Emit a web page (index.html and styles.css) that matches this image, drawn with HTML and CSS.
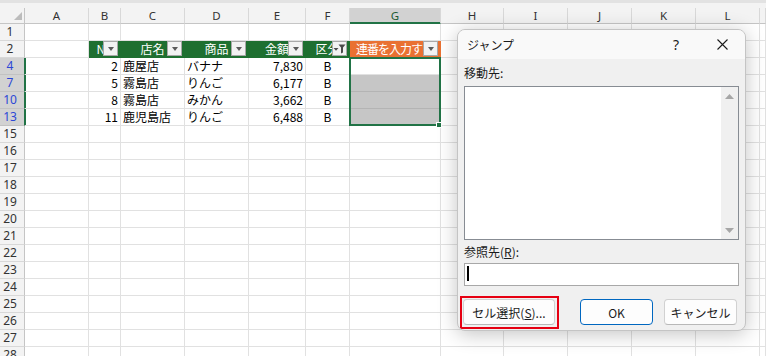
FILE: index.html
```html
<!DOCTYPE html>
<html lang="ja">
<head>
<meta charset="utf-8">
<title>ジャンプ</title>
<link rel="stylesheet" href="styles.css">
</head>
<body>
<div class="sheet">
  <div class="topstrip"></div>
  <div class="row colhead">
    <span class="ch corner"><svg width="8" height="8" viewBox="0 0 8 8"><polygon points="8,0 8,8 0,8" fill="#bcbcbc"/></svg></span>
    <span class="ch">A</span><span class="ch">B</span><span class="ch">C</span><span class="ch">D</span><span class="ch">E</span><span class="ch">F</span><span class="ch sel">G</span><span class="ch">H</span><span class="ch">I</span><span class="ch">J</span><span class="ch">K</span><span class="ch">L</span><span class="ch"></span>
  </div>
  <div class="row"><span class="rh">1</span><span class="c"></span><span class="c"></span><span class="c"></span><span class="c"></span><span class="c"></span><span class="c"></span><span class="c"></span><span class="c"></span><span class="c"></span><span class="c"></span><span class="c"></span><span class="c"></span><span class="c"></span></div>
  <div class="row"><span class="rh">2</span><span class="c"></span>
    <span class="th">No<span class="dd"></span></span>
    <span class="th">店名<span class="dd"></span></span>
    <span class="th">商品<span class="dd"></span></span>
    <span class="th">金額<span class="dd"></span></span>
    <span class="th">区分<span class="dd dd-filter"><svg width="13" height="11" viewBox="0 0 13 11"><polygon points="0.5,5 5.5,5 3,7.8" fill="#4a4a4a"/><polygon points="5.5,1.5 12.5,1.5 10,4.6 10,9.5 8,10.5 8,4.6" fill="#4a4a4a"/></svg></span></span>
    <span class="th th-org">連番を入力する<span class="dd"></span></span>
    <span class="c"></span><span class="c"></span><span class="c"></span><span class="c"></span><span class="c"></span><span class="c"></span></div>
  <div class="row"><span class="rh on">4</span><span class="c"></span><span class="c r">2</span><span class="c">鹿屋店</span><span class="c">バナナ</span><span class="c r">7,830</span><span class="c m">B</span><span class="c"></span><span class="c"></span><span class="c"></span><span class="c"></span><span class="c"></span><span class="c"></span><span class="c"></span></div>
  <div class="row"><span class="rh on">7</span><span class="c"></span><span class="c r">5</span><span class="c">霧島店</span><span class="c">りんご</span><span class="c r">6,177</span><span class="c m">B</span><span class="c sg"></span><span class="c"></span><span class="c"></span><span class="c"></span><span class="c"></span><span class="c"></span><span class="c"></span></div>
  <div class="row"><span class="rh on">10</span><span class="c"></span><span class="c r">8</span><span class="c">霧島店</span><span class="c">みかん</span><span class="c r">3,662</span><span class="c m">B</span><span class="c sg"></span><span class="c"></span><span class="c"></span><span class="c"></span><span class="c"></span><span class="c"></span><span class="c"></span></div>
  <div class="row"><span class="rh on">13</span><span class="c"></span><span class="c r">11</span><span class="c">鹿児島店</span><span class="c">りんご</span><span class="c r">6,488</span><span class="c m">B</span><span class="c sg"></span><span class="c"></span><span class="c"></span><span class="c"></span><span class="c"></span><span class="c"></span><span class="c"></span></div>
  <div class="row"><span class="rh">15</span><span class="c"></span><span class="c"></span><span class="c"></span><span class="c"></span><span class="c"></span><span class="c"></span><span class="c"></span><span class="c"></span><span class="c"></span><span class="c"></span><span class="c"></span><span class="c"></span><span class="c"></span></div>
  <div class="row"><span class="rh">16</span><span class="c"></span><span class="c"></span><span class="c"></span><span class="c"></span><span class="c"></span><span class="c"></span><span class="c"></span><span class="c"></span><span class="c"></span><span class="c"></span><span class="c"></span><span class="c"></span><span class="c"></span></div>
  <div class="row"><span class="rh">17</span><span class="c"></span><span class="c"></span><span class="c"></span><span class="c"></span><span class="c"></span><span class="c"></span><span class="c"></span><span class="c"></span><span class="c"></span><span class="c"></span><span class="c"></span><span class="c"></span><span class="c"></span></div>
  <div class="row"><span class="rh">18</span><span class="c"></span><span class="c"></span><span class="c"></span><span class="c"></span><span class="c"></span><span class="c"></span><span class="c"></span><span class="c"></span><span class="c"></span><span class="c"></span><span class="c"></span><span class="c"></span><span class="c"></span></div>
  <div class="row"><span class="rh">19</span><span class="c"></span><span class="c"></span><span class="c"></span><span class="c"></span><span class="c"></span><span class="c"></span><span class="c"></span><span class="c"></span><span class="c"></span><span class="c"></span><span class="c"></span><span class="c"></span><span class="c"></span></div>
  <div class="row"><span class="rh">20</span><span class="c"></span><span class="c"></span><span class="c"></span><span class="c"></span><span class="c"></span><span class="c"></span><span class="c"></span><span class="c"></span><span class="c"></span><span class="c"></span><span class="c"></span><span class="c"></span><span class="c"></span></div>
  <div class="row"><span class="rh">21</span><span class="c"></span><span class="c"></span><span class="c"></span><span class="c"></span><span class="c"></span><span class="c"></span><span class="c"></span><span class="c"></span><span class="c"></span><span class="c"></span><span class="c"></span><span class="c"></span><span class="c"></span></div>
  <div class="row"><span class="rh">22</span><span class="c"></span><span class="c"></span><span class="c"></span><span class="c"></span><span class="c"></span><span class="c"></span><span class="c"></span><span class="c"></span><span class="c"></span><span class="c"></span><span class="c"></span><span class="c"></span><span class="c"></span></div>
  <div class="row"><span class="rh">23</span><span class="c"></span><span class="c"></span><span class="c"></span><span class="c"></span><span class="c"></span><span class="c"></span><span class="c"></span><span class="c"></span><span class="c"></span><span class="c"></span><span class="c"></span><span class="c"></span><span class="c"></span></div>
  <div class="row"><span class="rh">24</span><span class="c"></span><span class="c"></span><span class="c"></span><span class="c"></span><span class="c"></span><span class="c"></span><span class="c"></span><span class="c"></span><span class="c"></span><span class="c"></span><span class="c"></span><span class="c"></span><span class="c"></span></div>
  <div class="row"><span class="rh">25</span><span class="c"></span><span class="c"></span><span class="c"></span><span class="c"></span><span class="c"></span><span class="c"></span><span class="c"></span><span class="c"></span><span class="c"></span><span class="c"></span><span class="c"></span><span class="c"></span><span class="c"></span></div>
  <div class="row"><span class="rh">26</span><span class="c"></span><span class="c"></span><span class="c"></span><span class="c"></span><span class="c"></span><span class="c"></span><span class="c"></span><span class="c"></span><span class="c"></span><span class="c"></span><span class="c"></span><span class="c"></span><span class="c"></span></div>
  <div class="row"><span class="rh">27</span><span class="c"></span><span class="c"></span><span class="c"></span><span class="c"></span><span class="c"></span><span class="c"></span><span class="c"></span><span class="c"></span><span class="c"></span><span class="c"></span><span class="c"></span><span class="c"></span><span class="c"></span></div>
  <div class="row"><span class="rh">28</span><span class="c"></span><span class="c"></span><span class="c"></span><span class="c"></span><span class="c"></span><span class="c"></span><span class="c"></span><span class="c"></span><span class="c"></span><span class="c"></span><span class="c"></span><span class="c"></span><span class="c"></span></div>
</div>

<div class="selbox"><span class="handle"></span></div>

<div class="dialog">
  <div class="dlg-title">
    <span class="ttl">ジャンプ</span>
    <span class="tbtn">?</span>
    <span class="tbtn"><svg width="11" height="11" viewBox="0 0 11 11"><path d="M0.5 0.5 L10.5 10.5 M10.5 0.5 L0.5 10.5" stroke="#1b1b1b" stroke-width="1.1" fill="none"/></svg></span>
  </div>
  <div class="dlg-body">
    <div class="lbl">移動先:</div>
    <div class="list">
      <div class="list-area"></div>
      <div class="vscroll">
        <svg width="9" height="5" viewBox="0 0 9 5"><polygon points="0,5 4.5,0 9,5" fill="#a6a6a6"/></svg>
        <svg width="9" height="5" viewBox="0 0 9 5"><polygon points="0,0 9,0 4.5,5" fill="#a6a6a6"/></svg>
      </div>
    </div>
    <div class="lbl lbl2">参照先(<u>R</u>):</div>
    <div class="input"><span class="caret"></span></div>
    <div class="btns">
      <span class="hl"><button class="btn btn-sel">セル選択(<u>S</u>)...</button></span>
      <button class="btn btn-ok">OK</button>
      <button class="btn btn-cancel">キャンセル</button>
    </div>
  </div>
</div>
</body>
</html>
```

FILE: styles.css
```css
* { box-sizing: border-box; margin: 0; padding: 0; }
html, body { width: 766px; height: 356px; overflow: hidden; }
body {
  position: relative;
  background: #fff;
  font-family: "Noto Sans CJK JP", "Noto Sans", sans-serif;
  color: #000;
}

.sheet { width: 766px; }
.topstrip { height: 8px; background: #f3f3f3; border-top: 3px solid #e2e2e2; }

.row {
  display: grid;
  grid-template-columns: 25px 64px 32px 64px 64px 57px 44px 91px 63px 64px 64px 64px 64px 1fr;
  height: 17px;
}
.colhead { height: 16px; }

.ch {
  background: #f3f3f3;
  border-right: 1px solid #d8d8d8;
  border-bottom: 1px solid #c5c5c5;
  font: 11.5px/15px "Noto Sans", sans-serif;
  color: #333;
  text-align: center;
}
.ch.sel {
  background: #d2d2d2;
  color: #1c5a33;
  border-bottom-color: #217346;
  box-shadow: inset 0 -1px 0 #217346;
}
.corner {
  display: flex;
  align-items: flex-end;
  justify-content: flex-end;
  padding: 0 2px 3px 0;
  border-right-color: #c5c5c5;
}

.rh {
  background: #f3f3f3;
  border-right: 1px solid #c5c5c5;
  border-bottom: 1px solid #d8d8d8;
  font: 12px/16px "Noto Sans", sans-serif;
  color: #333;
  text-align: center;
  padding-right: 4px;
}
.rh.on {
  background: #d2d2d2;
  color: #2b47d6;
  border-right-color: #217346;
  border-bottom-color: #c2c2c2;
  box-shadow: 1px 0 0 #217346;
}

.c {
  border-right: 1px solid #e1e1e1;
  border-bottom: 1px solid #e1e1e1;
  font-size: 12px;
  line-height: 16px;
  padding: 0 2px;
  white-space: nowrap;
  overflow: hidden;
}
.r { text-align: right; }
.m { text-align: center; }
.sg { background: #c6c6c6; border-bottom-color: #b4b4b4; }

.th {
  position: relative;
  background: #1e6f30;
  border-right: 1px solid #1e6f30;
  border-bottom: 1px solid #1e6f30;
  color: #fff;
  text-align: center;
  overflow: hidden;
  white-space: nowrap;
  font-size: 12px;
  line-height: 16px;
}
.th-org {
  background: #e97132;
  border-color: #e97132;
  text-align: left;
  padding-left: 6px;
  letter-spacing: -1px;
}

.dd {
  position: absolute;
  right: 2px;
  top: 0;
  width: 15px;
  height: 15px;
  background: #f2f2f2;
  border: 1px solid #a8a8a8;
  display: flex;
  align-items: center;
  justify-content: center;
}
.dd::after {
  content: "";
  border-left: 3.5px solid transparent;
  border-right: 3.5px solid transparent;
  border-top: 4px solid #5a5a5a;
}
.dd-filter::after { display: none; }

.selbox {
  position: absolute;
  left: 349px;
  top: 57px;
  width: 92px;
  height: 69px;
  border: 2px solid #217346;
}
.handle {
  position: absolute;
  right: -3px;
  bottom: -4px;
  width: 6px;
  height: 6px;
  background: #217346;
  border: 1px solid #fff;
}

.dialog {
  position: absolute;
  left: 457px;
  top: 29px;
  width: 289px;
  height: 302px;
  background: #f0f0f0;
  border: 1px solid #c4c4c4;
  border-radius: 8px;
  box-shadow: 0 3px 20px rgba(0, 0, 0, 0.24);
  overflow: hidden;
  font-family: "Noto Sans CJK JP", sans-serif;
  font-size: 12px;
  color: #1b1b1b;
}
.dlg-title {
  height: 29px;
  background: #f9f9f9;
  display: flex;
  align-items: center;
}
.ttl { flex: 1; padding-left: 9px; }
.tbtn {
  width: 46px;
  height: 29px;
  display: flex;
  align-items: center;
  justify-content: center;
  font-family: "Noto Sans", sans-serif;
  font-size: 14px;
}
.dlg-body { padding: 0 6px; }
.lbl { height: 18px; line-height: 18px; margin-top: 5px; }
.lbl2 { margin-top: 3px; }
.list {
  margin-top: 4px;
  height: 154px;
  border: 1px solid #878c93;
  background: #fff;
  display: flex;
}
.list-area { flex: 1; }
.vscroll {
  width: 17px;
  background: #f0f0f0;
  display: flex;
  flex-direction: column;
  justify-content: space-between;
  align-items: center;
  padding: 7px 0 6px;
}
.input {
  margin-top: 2px;
  height: 23px;
  border: 1px solid #a8a8a8;
  background: #fff;
  padding: 2px 0 0 2px;
}
.caret { display: block; width: 2px; height: 15px; background: #000; }

.btns { display: flex; margin-top: 13px; }
.btn {
  height: 26px;
  background: #fdfdfd;
  border: 1px solid #d1d1d1;
  border-bottom-color: #b8b8b8;
  border-radius: 4px;
  font-family: "Noto Sans CJK JP", sans-serif;
  font-size: 12px;
  color: #1b1b1b;
  display: flex;
  align-items: center;
  justify-content: center;
}
.hl { position: relative; margin-left: -1px; width: 92px; display: flex; }
.hl::after {
  content: "";
  position: absolute;
  left: -3px;
  top: -3px;
  right: -4px;
  bottom: -4px;
  border: 2px solid #e60012;
}
.btn-sel { width: 92px; }
.btn-ok { margin-left: 25px; width: 73px; border-color: #0067c0; }
.btn-cancel { margin-left: 11px; width: 73px; }
```
